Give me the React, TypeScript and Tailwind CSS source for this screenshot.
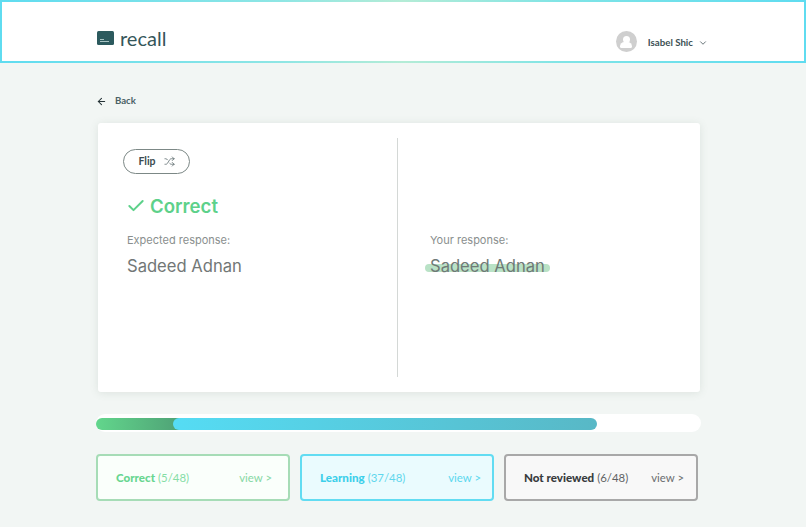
import { ArrowLeft, Check, ChevronDown, Shuffle } from "lucide-react";

function StatCard({ label, count, box, tone, view }: { label: string; count: string; box: string; tone: string; view: string }) {
  return (
    <div className={`w-[194px] h-[47px] rounded-[4px] border-2 flex items-center justify-between whitespace-nowrap pl-[18px] text-[11.6px] ${box}`}>
      <span className={`font-["Lato",sans-serif] ${tone}`}>
        <b className="font-black">{label}</b> <span className="font-normal text-[11.4px] opacity-80">{count}</span>
      </span>
      <span className={`font-["Lato",sans-serif] font-normal text-[11.4px] pt-[1px] ${view}`}>{"view >"}</span>
    </div>
  );
}

export default function App() {
  return (
    <div className="w-[806px] h-[527px] overflow-hidden bg-[#f2f6f4] flex flex-col">
      <header className="h-[63px] shrink-0 p-[2px] bg-[linear-gradient(90deg,#5fdcf0_0%,#8fe6e4_35%,#b4ecd6_50%,#7fe4e6_70%,#5fdcf0_100%)]">
        <div className="h-full bg-white flex items-start justify-between pl-[95px] pr-[96px]">
          <div className="flex items-center gap-[6px] mt-[22px]">
            <div className="w-[17px] h-[14px] rounded-[1.5px] bg-[#2c5a5e] flex flex-col justify-end items-start pl-[3px] pb-[3px] gap-[1px]">
              <div className="w-[4px] h-[1px] bg-[#a8c4c4]" />
              <div className="w-[9px] h-[1px] bg-[#a8c4c4]" />
            </div>
            <span className="font-['Lato',sans-serif] text-[20px] leading-[28px] text-[#35565a] font-normal">recall</span>
          </div>
          <div className="flex items-center mt-[29px]">
            <div className="w-[21px] h-[21px] rounded-full bg-[#cfcfcf] flex flex-col items-center justify-center overflow-hidden">
              <div className="w-[7px] h-[7px] rounded-full bg-white" />
              <div className="w-[12px] h-[6px] rounded-t-[6px] rounded-b-[2px] bg-white -mt-[1px]" />
            </div>
            <span className="ml-[11px] pt-[2px] font-['Lato',sans-serif] font-bold text-[9.7px] text-[#3c5054]">Isabel Shic</span>
            <ChevronDown className="ml-[5px] mt-[2px] text-[#4c5c60]" size={10} strokeWidth={2} />
          </div>
        </div>
      </header>

      <main className="pl-[96px] w-[702px] flex flex-col">
        <div className="flex items-center gap-[8px] mt-[30px] h-[16px]">
          <ArrowLeft size={11} strokeWidth={2.2} className="text-[#243236]" />
          <span className="font-['Lato',sans-serif] font-bold text-[9.6px] text-[#4a6266]">Back</span>
        </div>

        <section className="ml-[2px] w-[602px] h-[269px] mt-[14px] bg-white rounded-[3px] shadow-[0_1px_8px_rgba(90,110,100,0.14)] flex py-[15px]">
          <div className="w-[300px] border-r border-[#d4d8d6] pl-[25px] font-['Inter',sans-serif]">
            <button className="w-[67px] h-[25px] rounded-full border border-[#7c8886] flex items-center justify-center gap-[8px] mt-[11px]">
              <span className="font-['Lato',sans-serif] font-bold text-[10.5px] text-[#3c4c50]">Flip</span>
              <Shuffle size={11} strokeWidth={1.4} className="text-[#3c4c50]" />
            </button>
            <div className="flex items-center gap-[4px] mt-[18px] ml-[3px] text-[#5dd18a]">
              <Check size={20} strokeWidth={2.4} />
              <span className="font-semibold text-[18.6px] leading-[28px]">Correct</span>
            </div>
            <p className="mt-[12px] ml-[4px] text-[11px] leading-[16px] text-[#8a8f8e]">Expected response:</p>
            <p className="mt-[6px] ml-[4px] text-[16.6px] leading-[24px] text-[#727776]">Sadeed Adnan</p>
          </div>
          <div className="pl-[32px] pt-[94px] font-['Inter',sans-serif]">
            <p className="text-[11px] leading-[16px] text-[#8a8f8e]">Your response:</p>
            <p className="relative mt-[6px] w-fit text-[16.6px] leading-[24px] text-[#6f7a76]">
              <span className="absolute left-[-5px] right-[-5px] top-[10px] h-[8px] rounded-full bg-[#b9e2c6]" />
              <span className="relative">Sadeed Adnan</span>
            </p>
          </div>
        </section>

        <div className="mt-[22px] h-[18px] w-[605px] rounded-full bg-white flex items-center pt-[2px]">
          <div className="h-[12px] w-[501px] flex">
            <div className="w-[84px] h-full rounded-l-full bg-[linear-gradient(90deg,#62d68c,#4fa276)]" />
            <div className="flex-1 -ml-[7px] h-full rounded-full bg-[linear-gradient(90deg,#55dcf4_0%,#58b8c6_100%)]" />
          </div>
        </div>

        <div className="flex gap-[10px] mt-[22px]">
          <StatCard label="Correct" count="(5/48)" box="border-[#a6dcb6] bg-[#fafffb] pr-[16px]" tone="text-[#68d690]" view="text-[#86d8a4]" />
          <StatCard label="Learning" count="(37/48)" box="border-[#62dcf2] bg-[#eafbfe] pr-[11px]" tone="text-[#3ccfea]" view="text-[#5ad8ee]" />
          <StatCard label="Not reviewed" count="(6/48)" box="border-[#a8a8a8] bg-[#f8f8f8] pr-[12px]" tone="text-[#383c3e]" view="text-[#6a6e70]" />
        </div>
      </main>
    </div>
  );
}
